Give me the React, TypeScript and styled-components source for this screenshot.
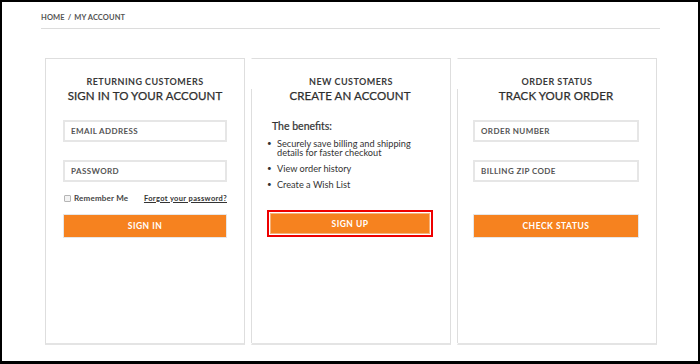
import React from 'react';
import styled, { createGlobalStyle, css } from 'styled-components';

const GlobalStyle = createGlobalStyle`
  html, body {
    margin: 0;
    padding: 0;
    background: #000;
  }
  * {
    box-sizing: border-box;
  }
`;

const Frame = styled.div`
  width: 700px;
  height: 364px;
  border: 2px solid #000;
  border-bottom-width: 3px;
  background: #fff;
  padding: 0 0 0 39px;
  font-family: Lato, 'Liberation Sans', sans-serif;
  color: #333;
  overflow: hidden;
`;

const Breadcrumb = styled.div`
  width: 619px;
  padding: 11px 0 5px;
  border-bottom: 1px solid #dcdcdc;
  font-size: 7.5px;
  font-weight: 700;
  color: #555;
  letter-spacing: 0.1px;
  line-height: 10px;
  span {
    margin: 0 3px;
  }
`;

const Cards = styled.div`
  display: grid;
  grid-template-columns: repeat(3, 200px);
  gap: 6px;
  margin: 29px 0 0 4px;
`;

const Card = styled.div<{ $split?: boolean }>`
  height: 287px;
  border: 1px solid #dedede;
  border-bottom: 2px solid #e4e4e4;
  display: flex;
  flex-direction: column;
  ${({ $split }) =>
    $split &&
    css`
      border-left-color: #fff;
    `}
`;

const Kicker = styled.div`
  padding-top: 16px;
  height: 30px;
  text-align: center;
  font-size: 9px;
  font-weight: 700;
  letter-spacing: 0.45px;
  line-height: 14px;
  color: #3a3a3a;
`;

const Body = styled.div<{ $split?: boolean }>`
  flex: 1;
  padding: 0 17px;
  display: flex;
  flex-direction: column;
  ${({ $split }) =>
    $split &&
    css`
      margin-left: -1px;
      padding-left: 15px;
      border-left: 1px solid #dedede;
    `}
`;

const Title = styled.div`
  text-align: center;
  white-space: nowrap;
  font-size: 11.5px;
  font-weight: 400;
  letter-spacing: 0.1px;
  line-height: 14px;
  color: #2e2e2e;
  -webkit-text-stroke: 0.25px #2e2e2e;
  margin-bottom: 17px;
`;

const Field = styled.div`
  height: 22px;
  border: 2px solid #e6e6e6;
  padding-left: 6px;
  display: flex;
  align-items: center;
  font-size: 8px;
  font-weight: 700;
  color: #555;
  letter-spacing: 0.4px;
  & + & {
    margin-top: 18px;
  }
`;

const OptionsRow = styled.div`
  display: flex;
  justify-content: space-between;
  align-items: center;
  height: 12px;
  margin-top: 10px;
`;

const Remember = styled.label`
  display: flex;
  align-items: center;
  gap: 3px;
  font-size: 8px;
  font-weight: 700;
  color: #444;
  letter-spacing: 0.2px;
  margin-left: 1px;
`;

const Box = styled.span`
  width: 7px;
  height: 7px;
  border: 1px solid #b5b5b5;
  border-radius: 1px;
  background: #f3f3f3;
`;

const Forgot = styled.a`
  font-size: 7.5px;
  font-weight: 700;
  color: #333;
  text-decoration: underline;
  letter-spacing: 0.35px;
`;

const Button = styled.div<{ $gap?: number }>`
  margin-top: ${({ $gap }) => $gap ?? 10}px;
  height: 24px;
  background: #f6821f;
  border: 1px solid #e6e6e6;
  color: #fff;
  font-size: 8.5px;
  font-weight: 700;
  letter-spacing: 0.5px;
  display: flex;
  align-items: center;
  justify-content: center;
`;

const Focused = styled.div`
  margin-top: 14px;
  border: 2px solid #ee0000;
  padding: 1px;
  ${Button} {
    margin-top: 0;
    height: 21px;
    border-color: #f6b37a;
  }
`;

const Benefits = styled.div`
  padding-left: 5px;
  font-size: 10.5px;
  font-weight: 400;
  color: #333;
  line-height: 13px;
  -webkit-text-stroke: 0.2px #333;
`;

const List = styled.ul`
  margin: 6px 0 0;
  padding: 0;
  list-style: none;
  font-size: 9.2px;
  color: #333;
  line-height: 9px;
  li {
    display: flex;
    margin-bottom: 7px;
  }
  li::before {
    content: '•';
    flex: 0 0 10px;
    font-size: 8px;
  }
`;

export default function App() {
  return (
    <>
      <GlobalStyle />
      <Frame>
        <Breadcrumb>
          HOME<span>/</span>MY ACCOUNT
        </Breadcrumb>
        <Cards>
          <Card>
            <Kicker>RETURNING CUSTOMERS</Kicker>
            <Body>
              <Title>SIGN IN TO YOUR ACCOUNT</Title>
              <Field>EMAIL ADDRESS</Field>
              <Field>PASSWORD</Field>
              <OptionsRow>
                <Remember>
                  <Box />
                  Remember Me
                </Remember>
                <Forgot>Forgot your password?</Forgot>
              </OptionsRow>
              <Button>SIGN IN</Button>
            </Body>
          </Card>
          <Card $split>
            <Kicker>NEW CUSTOMERS</Kicker>
            <Body $split>
              <Title>CREATE AN ACCOUNT</Title>
              <Benefits>The benefits:</Benefits>
              <List>
                <li>Securely save billing and shipping details for faster checkout</li>
                <li>View order history</li>
                <li>Create a Wish List</li>
              </List>
              <Focused>
                <Button>SIGN UP</Button>
              </Focused>
            </Body>
          </Card>
          <Card $split>
            <Kicker>ORDER STATUS</Kicker>
            <Body $split>
              <Title>TRACK YOUR ORDER</Title>
              <Field>ORDER NUMBER</Field>
              <Field>BILLING ZIP CODE</Field>
              <Button $gap={32}>CHECK STATUS</Button>
            </Body>
          </Card>
        </Cards>
      </Frame>
    </>
  );
}
